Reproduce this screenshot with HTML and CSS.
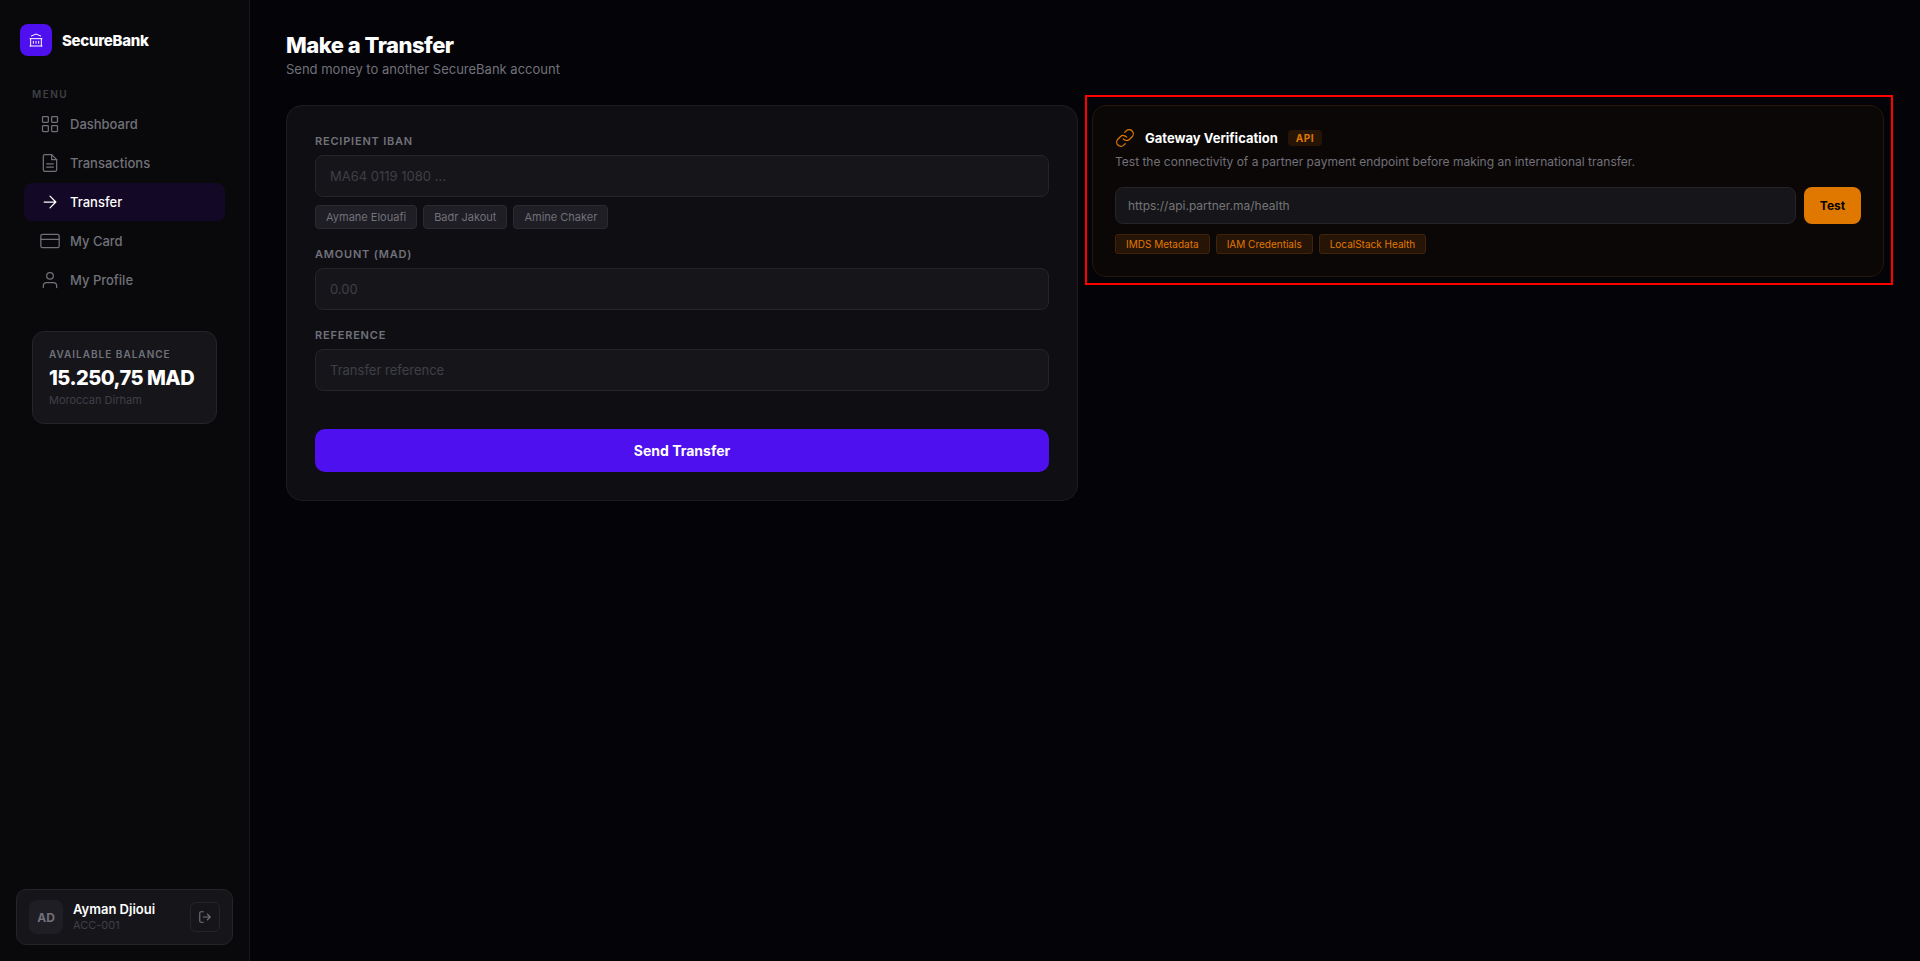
FILE: index.html
```
<!DOCTYPE html>
<html lang="en">

<head>
  <meta charset="UTF-8">
  <title>SecureBank</title>
  <link rel="stylesheet" href="styles.css">
</head>

<body>
  <aside class="sidebar">
    <div class="brand">
      <div class="brand-logo">
        <svg width="16" height="16" viewBox="0 0 24 24" fill="none" stroke="currentColor" stroke-width="1.5" stroke-linecap="round" stroke-linejoin="round"><path d="M3 21h18M3 10h18M5 6l7-3 7 3M4 10v11M20 10v11M8 14v3M12 14v3M16 14v3"/></svg>
      </div>
      <span class="brand-name">SecureBank</span>
    </div>

    <div class="menu-label">MENU</div>
    <nav class="menu">
      <a class="menu-item">
        <svg class="icon" viewBox="0 0 24 24"><rect x="3" y="3" width="7" height="7" rx="1"/><rect x="14" y="3" width="7" height="7" rx="1"/><rect x="3" y="14" width="7" height="7" rx="1"/><rect x="14" y="14" width="7" height="7" rx="1"/></svg>
        <span>Dashboard</span>
      </a>
      <a class="menu-item">
        <svg class="icon" viewBox="0 0 24 24"><path d="M14 2H6a2 2 0 0 0-2 2v16a2 2 0 0 0 2 2h12a2 2 0 0 0 2-2V8z"/><path d="M14 2v6h6M16 13H8M16 17H8"/></svg>
        <span>Transactions</span>
      </a>
      <a class="menu-item active">
        <svg class="icon" viewBox="0 0 24 24"><path d="M5 12h14M12 5l7 7-7 7"/></svg>
        <span>Transfer</span>
      </a>
      <a class="menu-item">
        <svg class="icon" viewBox="0 0 24 24"><rect x="1" y="4" width="22" height="16" rx="2"/><path d="M1 10h22"/></svg>
        <span>My Card</span>
      </a>
      <a class="menu-item">
        <svg class="icon" viewBox="0 0 24 24"><path d="M20 21v-2a4 4 0 0 0-4-4H8a4 4 0 0 0-4 4v2"/><circle cx="12" cy="7" r="4"/></svg>
        <span>My Profile</span>
      </a>
    </nav>

    <div class="balance">
      <div class="balance-label">AVAILABLE BALANCE</div>
      <div class="balance-value">15.250,75 MAD</div>
      <div class="balance-currency">Moroccan Dirham</div>
    </div>

    <div class="user">
      <div class="avatar">AD</div>
      <div class="user-info">
        <div class="user-name">Ayman Djioui</div>
        <div class="user-id">ACC-001</div>
      </div>
      <button class="logout" aria-label="Log out">
        <svg width="14" height="14" viewBox="0 0 24 24" fill="none" stroke="currentColor" stroke-width="2" stroke-linecap="round" stroke-linejoin="round"><path d="M9 21H5a2 2 0 0 1-2-2V5a2 2 0 0 1 2-2h4M16 17l5-5-5-5M21 12H9"/></svg>
      </button>
    </div>
  </aside>

  <main class="main">
    <h1 class="page-title">Make a Transfer</h1>
    <p class="page-subtitle">Send money to another SecureBank account</p>

    <div class="columns">
      <form class="card">
        <div class="field">
          <label class="field-label">RECIPIENT IBAN</label>
          <input class="field-input" type="text" placeholder="MA64 0119 1080 ...">
          <div class="chips">
            <span class="chip">Aymane Elouafi</span>
            <span class="chip">Badr Jakout</span>
            <span class="chip">Amine Chaker</span>
          </div>
        </div>
        <div class="field">
          <label class="field-label">AMOUNT (MAD)</label>
          <input class="field-input" type="text" placeholder="0.00">
        </div>
        <div class="field">
          <label class="field-label">REFERENCE</label>
          <input class="field-input" type="text" placeholder="Transfer reference">
        </div>
        <button class="send" type="button">Send Transfer</button>
      </form>

      <section class="gateway">
        <div class="highlight"></div>
        <div class="gateway-header">
          <svg class="icon" viewBox="0 0 24 24"><path d="M10 13a5 5 0 0 0 7.54.54l3-3a5 5 0 0 0-7.07-7.07l-1.72 1.71"/><path d="M14 11a5 5 0 0 0-7.54-.54l-3 3a5 5 0 0 0 7.07 7.07l1.71-1.71"/></svg>
          <span class="gateway-title">Gateway Verification</span>
          <span class="badge">API</span>
        </div>
        <p class="gateway-text">Test the connectivity of a partner payment endpoint before making an international transfer.</p>
        <div class="gateway-row">
          <input class="gateway-input" type="text" placeholder="https://api.partner.ma/health">
          <button class="test" type="button">Test</button>
        </div>
        <div class="presets">
          <span class="preset">IMDS Metadata</span>
          <span class="preset">IAM Credentials</span>
          <span class="preset">LocalStack Health</span>
        </div>
      </section>
    </div>
  </main>
</body>

</html>
```
FILE: styles.css
```
* {
  box-sizing: border-box;
  margin: 0;
  padding: 0;
}

body {
  display: flex;
  height: 100vh;
  overflow: hidden;
  background: #030308;
  color: #fff;
  font-family: Inter, sans-serif;
  font-size: 13px;
}

input,
button {
  font-family: inherit;
}

.icon {
  width: 20px;
  height: 20px;
  flex-shrink: 0;
  fill: none;
  stroke: currentColor;
  stroke-width: 1.5;
  stroke-linecap: round;
  stroke-linejoin: round;
}

/* Sidebar */
.sidebar {
  display: flex;
  flex-direction: column;
  flex-shrink: 0;
  width: 250px;
  padding: 24px 16px 16px;
  background: #09090b;
  border-right: 1px solid #19191d;
}

.brand {
  display: flex;
  align-items: center;
  gap: 10px;
  height: 32px;
  padding-left: 4px;
}

.brand-logo {
  display: flex;
  align-items: center;
  justify-content: center;
  width: 32px;
  height: 32px;
  border-radius: 8px;
  background: #4f10f0;
}

.brand-name {
  font-size: 15px;
  font-weight: 800;
  letter-spacing: -0.3px;
}

.menu-label {
  margin: 32px 16px 0;
  font-size: 10px;
  font-weight: 600;
  line-height: 12px;
  letter-spacing: 1.5px;
  color: #3f3f46;
}

.menu {
  display: flex;
  flex-direction: column;
  gap: 1px;
  margin: 5px 8px 0;
}

.menu-item {
  display: flex;
  align-items: center;
  gap: 10px;
  height: 38px;
  padding: 0 16px;
  border-radius: 8px;
  font-weight: 500;
  line-height: 16px;
  color: #71717a;
}

.menu-item.active {
  background: #130926;
  color: #fff;
}

.balance {
  height: 93px;
  margin: 32px 16px 0;
  padding: 16px;
  border: 1px solid #242429;
  border-radius: 12px;
  background: #16161a;
}

.balance-label {
  font-size: 10px;
  font-weight: 600;
  line-height: 12px;
  letter-spacing: 1px;
  color: #71717a;
}

.balance-value {
  margin-top: 6px;
  font-size: 20px;
  font-weight: 800;
  line-height: 24px;
  letter-spacing: -0.5px;
}

.balance-currency {
  margin-top: 3px;
  font-size: 11px;
  line-height: 14px;
  color: #3f3f46;
}

.user {
  display: flex;
  align-items: center;
  gap: 10px;
  height: 56px;
  margin-top: auto;
  padding: 0 12px;
  border: 1px solid #242429;
  border-radius: 10px;
  background: #16161a;
}

.avatar {
  display: flex;
  align-items: center;
  justify-content: center;
  width: 34px;
  height: 34px;
  border-radius: 8px;
  background: #1e1e24;
  font-size: 12px;
  font-weight: 700;
  color: #71717a;
}

.user-info {
  flex: 1;
}

.user-name {
  font-size: 13px;
  font-weight: 600;
  line-height: 16px;
}

.user-id {
  font-size: 11px;
  line-height: 16px;
  color: #3f3f46;
}

.logout {
  display: flex;
  align-items: center;
  justify-content: center;
  width: 30px;
  height: 30px;
  border: 1px solid #242429;
  border-radius: 6px;
  background: none;
  color: #71717a;
}

/* Main */
.main {
  flex: 1;
  padding: 32px 36px;
}

.page-title {
  font-size: 22px;
  font-weight: 800;
  line-height: 27px;
  letter-spacing: -0.5px;
}

.page-subtitle {
  margin-top: 2px;
  line-height: 16px;
  color: #71717a;
}

.columns {
  display: grid;
  grid-template-columns: 1fr 1fr;
  align-items: start;
  gap: 14px;
  margin-top: 28px;
}

.card {
  display: flex;
  flex-direction: column;
  gap: 18px;
  padding: 28px;
  border: 1px solid #1d1d21;
  border-radius: 16px;
  background: #0f0f13;
}

.field-label {
  display: block;
  margin-bottom: 7px;
  font-size: 11px;
  font-weight: 600;
  line-height: 14px;
  letter-spacing: 0.8px;
  color: #71717a;
}

.field-input {
  display: block;
  width: 100%;
  height: 42px;
  padding: 0 14px;
  border: 1px solid #242429;
  border-radius: 8px;
  background: #16161a;
  color: #fff;
  font-size: 13px;
}

.field-input::placeholder {
  color: #3f3f46;
}

.chips,
.presets {
  display: flex;
  gap: 6px;
}

.chips {
  margin-top: 8px;
}

.chip {
  height: 24px;
  padding: 0 10px;
  border: 1px solid #2a2a30;
  border-radius: 4px;
  background: #1e1e24;
  font-size: 11px;
  line-height: 22px;
  color: #71717a;
}

.send {
  height: 43px;
  margin-top: 20px;
  border: none;
  border-radius: 10px;
  background: #4f10f0;
  color: #fff;
  font-size: 14px;
  font-weight: 700;
}

/* Gateway */
.gateway {
  position: relative;
  padding: 22px;
  border: 1px solid #26160a;
  border-radius: 14px;
  background: #0b0706;
}

.highlight {
  position: absolute;
  top: -11px;
  right: -10px;
  bottom: -9px;
  left: -8px;
  border: 2px solid #f00;
  pointer-events: none;
}

.gateway-header {
  display: flex;
  align-items: center;
  gap: 10px;
  height: 20px;
  color: #e07800;
}

.gateway-title {
  font-weight: 700;
  color: #fff;
}

.badge {
  padding: 0 8px;
  border-radius: 4px;
  background: #261407;
  font-size: 10px;
  font-weight: 700;
  line-height: 16px;
  letter-spacing: 0.5px;
}

.gateway-text {
  margin-top: 6px;
  font-size: 12px;
  line-height: 15px;
  color: #71717a;
}

.gateway-row {
  display: flex;
  gap: 8px;
  margin-top: 18px;
}

.gateway-input {
  flex: 1;
  height: 37px;
  padding: 0 12px;
  border: 1px solid #242429;
  border-radius: 8px;
  background: #16161a;
  color: #fff;
  font-size: 12px;
}

.gateway-input::placeholder {
  color: #757575;
}

.test {
  width: 57px;
  border: none;
  border-radius: 8px;
  background: #e07800;
  color: #000;
  font-size: 12px;
  font-weight: 700;
}

.presets {
  margin-top: 10px;
}

.preset {
  height: 20px;
  padding: 0 10px;
  border: 1px solid #42230a;
  border-radius: 3px;
  background: #261407;
  font-size: 10px;
  line-height: 18px;
  color: #e07800;
}
```
